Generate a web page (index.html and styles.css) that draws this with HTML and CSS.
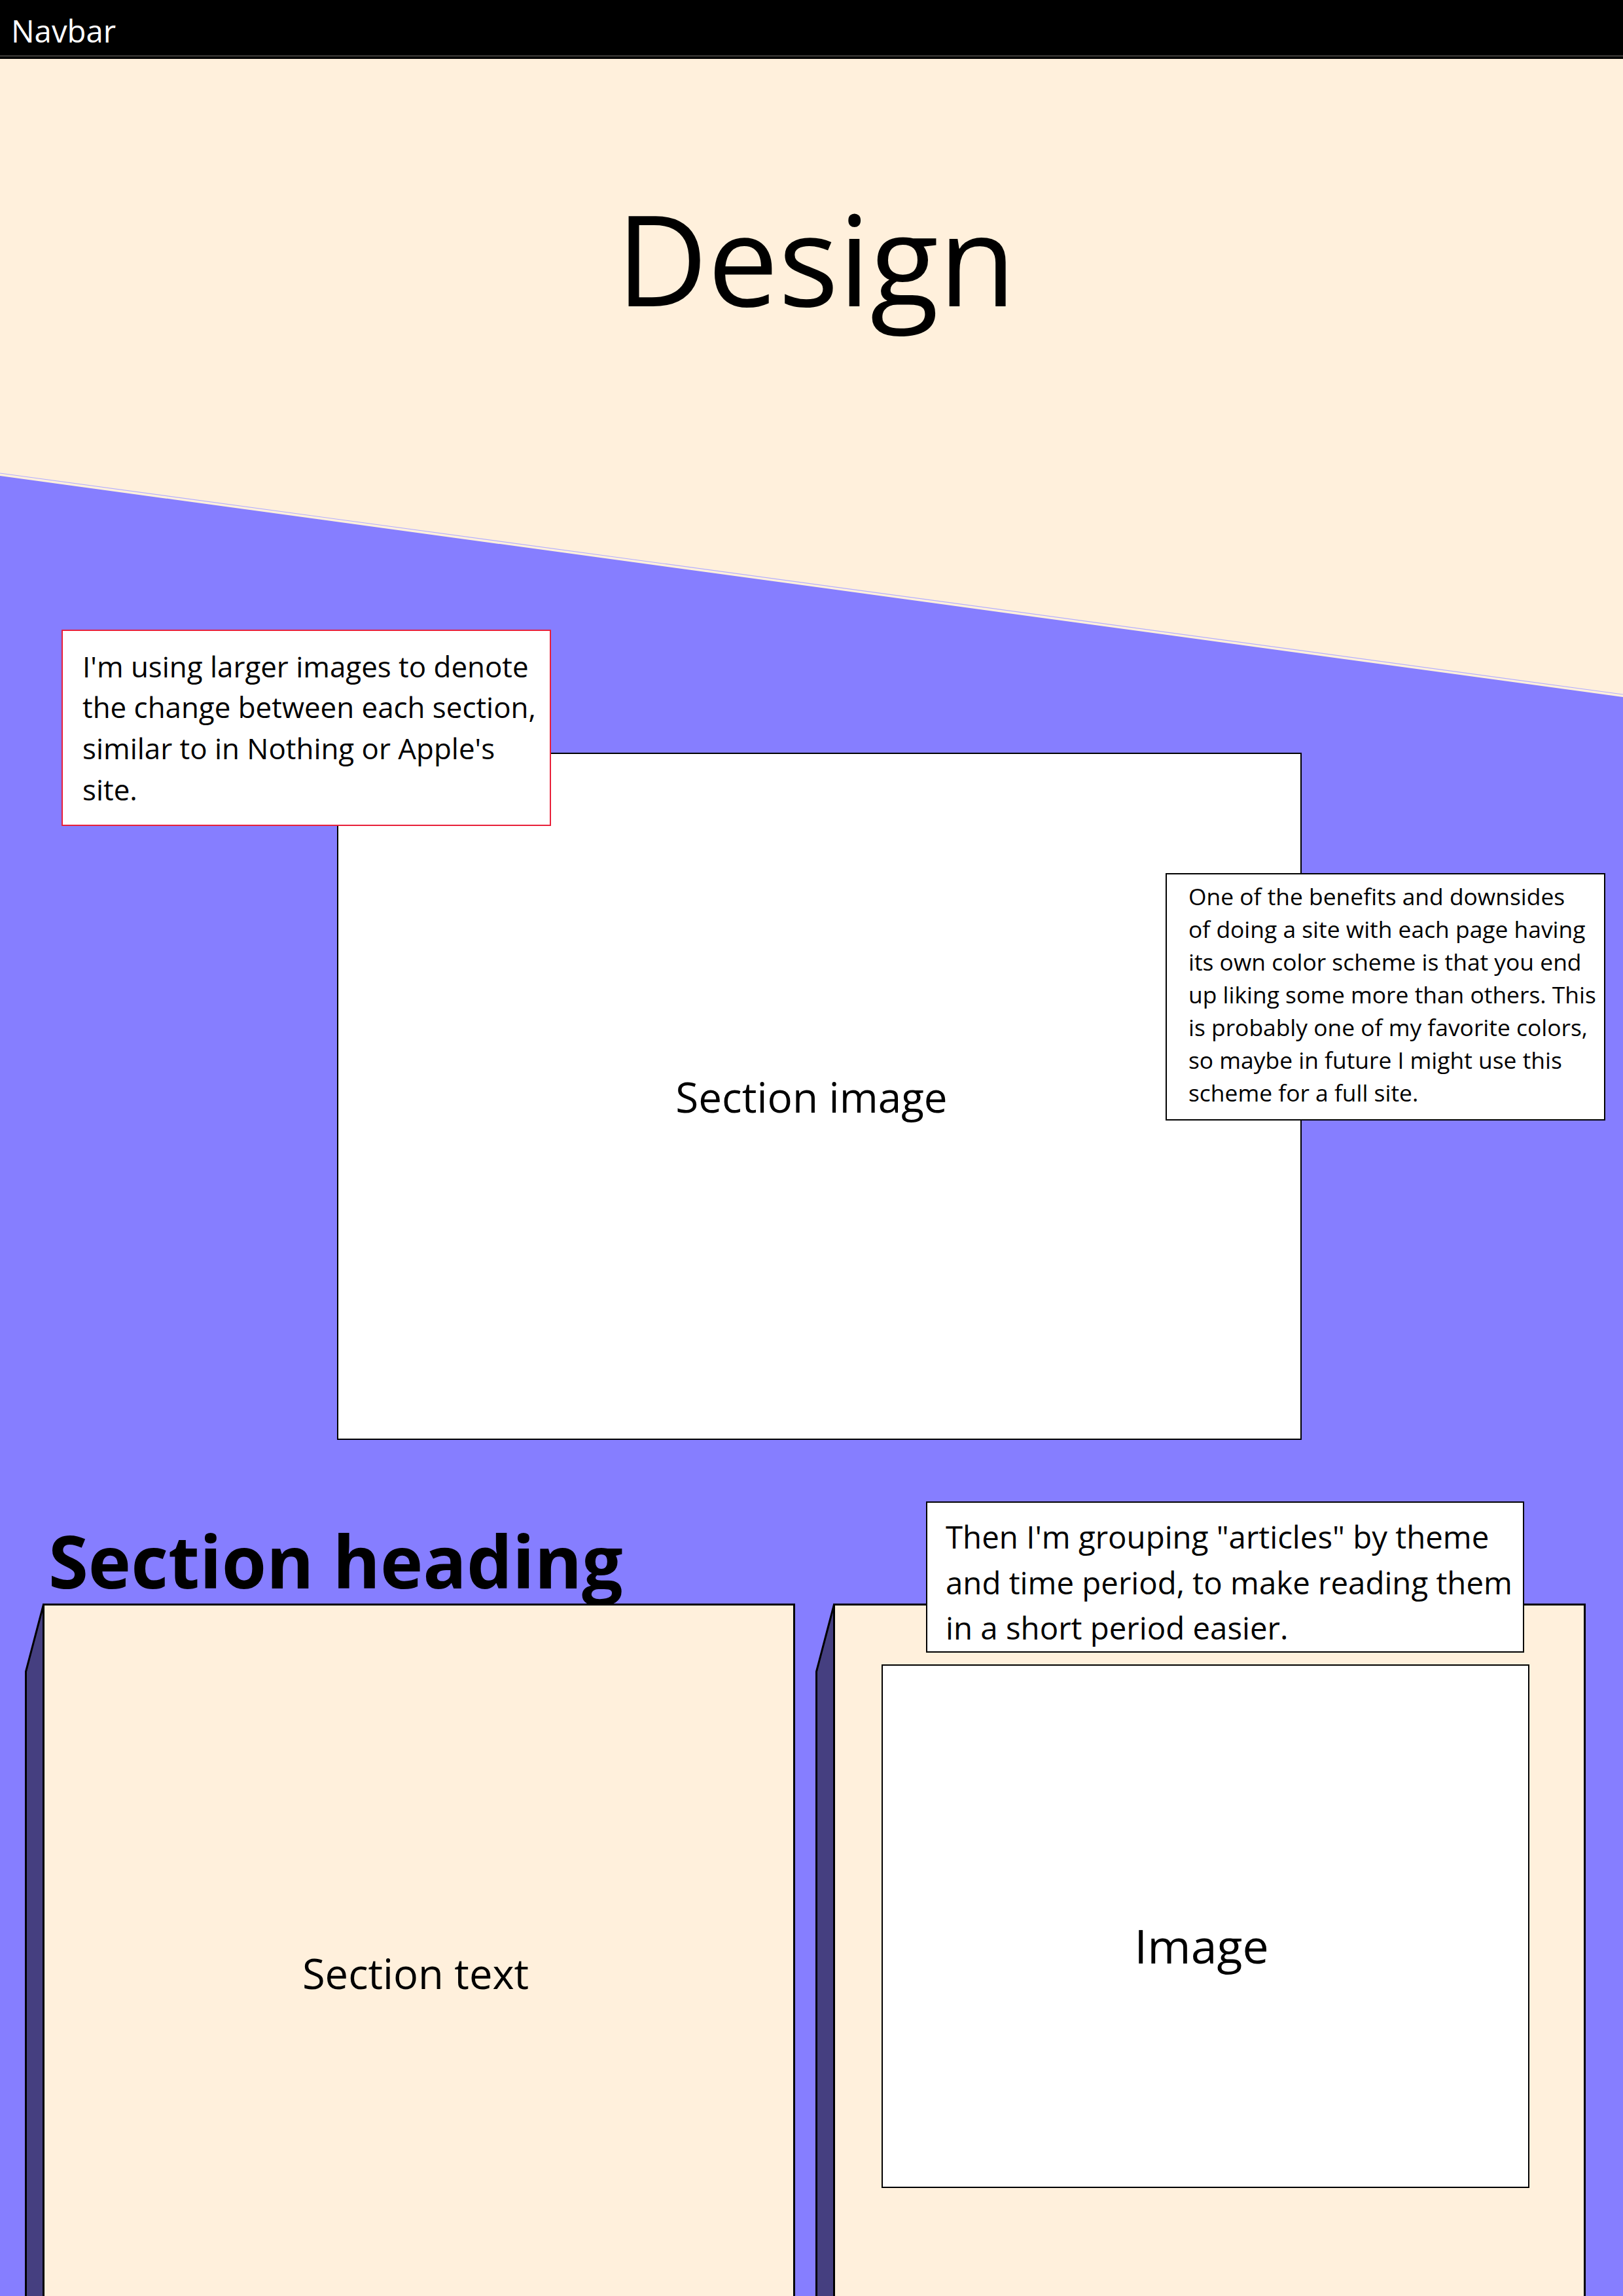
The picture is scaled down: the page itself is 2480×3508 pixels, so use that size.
FILE: index.html
```html
<!DOCTYPE html>
<html lang="en">
<head>
<meta charset="utf-8">
<title>Design</title>
<link rel="stylesheet" href="styles.css">
</head>
<body>
<nav class="navbar">Navbar</nav>
<header class="hero">
  <h1 class="hero-title">Design</h1>
</header>
<main class="band">
  <svg class="slope-line" viewBox="0 0 2480 350" preserveAspectRatio="none" aria-hidden="true">
    <line x1="0" y1="2" x2="2480" y2="340"></line>
  </svg>
  <div class="band-fill">
    <div class="feature">
      <div class="feature-image">Section image</div>
      <aside class="note note-red">I'm using larger images to denote<br>the change between each section,<br>similar to in Nothing or Apple's<br>site.</aside>
      <aside class="note note-side">One of the benefits and downsides<br>of doing a site with each page having<br>its own color scheme is that you end<br>up liking some more than others. This<br>is probably one of my favorite colors,<br>so maybe in future I might use this<br>scheme for a full site.</aside>
    </div>
    <h2 class="section-heading">Section heading</h2>
    <div class="cards">
      <article class="card">
        <svg class="card-side" viewBox="0 0 33 1130" aria-hidden="true"><path d="M31.5 1.5 L4.5 104 L4.5 1130 L31.5 1130 Z"></path></svg>
        <p class="card-text">Section text</p>
      </article>
      <article class="card">
        <svg class="card-side" viewBox="0 0 33 1130" aria-hidden="true"><path d="M31.5 1.5 L4.5 104 L4.5 1130 L31.5 1130 Z"></path></svg>
        <aside class="note note-group">Then I'm grouping "articles" by theme<br>and time period, to make reading them<br>in a short period easier.</aside>
        <div class="card-image">Image</div>
      </article>
    </div>
  </div>
</main>
</body>
</html>
```
FILE: styles.css
```css
html, body {
  margin: 0;
  padding: 0;
}

body {
  background: #FFF0DC;
  color: #000;
  font-family: "Open Sans", "Noto Sans", sans-serif;
}

.navbar {
  box-sizing: border-box;
  height: 90px;
  padding: 14px 0 0 17px;
  background: #000;
  color: #fff;
  font-size: 47.3px;
  border-bottom: 4px solid #000;
  box-shadow: inset 0 -1px 0 #7a7570;
}

.hero {
  box-sizing: border-box;
  height: 637px;
  padding: 172px 0 0 14px;
  text-align: center;
}

.hero-title {
  margin: 0;
  font-size: 192.5px;
  font-weight: 400;
  line-height: normal;
}

.band {
  position: relative;
}

.slope-line {
  position: absolute;
  left: 0;
  top: -6px;
  width: 100%;
  height: 350px;
  z-index: 1;
}

.slope-line line {
  stroke: #b4aeff;
  stroke-width: 1.2;
  vector-effect: non-scaling-stroke;
}

.band-fill {
  box-sizing: border-box;
  height: 2781px;
  overflow: hidden;
  padding-top: 423px;
  background: #867EFF;
  clip-path: polygon(0 0, 100% 338px, 100% 100%, 0 100%);
}

.feature {
  position: relative;
  margin-left: 515px;
  width: 1474px;
  height: 1050px;
}

.feature-image {
  box-sizing: border-box;
  height: 100%;
  padding-right: 24px;
  border: 2px solid #000;
  background: #fff;
  display: flex;
  align-items: center;
  justify-content: center;
  font-size: 63.8px;
}

.note {
  position: absolute;
  box-sizing: border-box;
  margin: 0;
  background: #fff;
  border: 2px solid #000;
}

.note-red {
  left: -421px;
  top: -188px;
  width: 748px;
  height: 300px;
  padding: 22.5px 0 0 30px;
  border-color: #E8203A;
  font-size: 43.9px;
  line-height: 62.7px;
}

.note-side {
  left: 1266px;
  top: 184px;
  width: 672px;
  height: 378px;
  padding: 7.5px 0 0 33px;
  font-size: 35.4px;
  line-height: 50px;
}

.section-heading {
  margin: 129px 0 0;
  padding-left: 74px;
  font-size: 110.5px;
  font-weight: 700;
  line-height: 1;
}

.cards {
  display: flex;
  gap: 58px;
  margin-top: 10px;
  padding-left: 65px;
}

.card {
  position: relative;
  box-sizing: border-box;
  flex: none;
  width: 1150px;
  height: 1130px;
  border: 3px solid #000;
  background: #FFF0DC;
}

.card-side {
  position: absolute;
  left: -33px;
  top: -3px;
  width: 33px;
  height: 1130px;
  overflow: visible;
}

.card-side path {
  fill: #453F80;
  stroke: #000;
  stroke-width: 3;
  stroke-linejoin: round;
}

.card-text {
  margin: 0;
  height: 100%;
  padding-right: 10px;
  box-sizing: border-box;
  display: flex;
  align-items: center;
  justify-content: center;
  font-size: 63.3px;
}

.note-group {
  left: 139px;
  top: -159px;
  width: 914px;
  height: 231px;
  padding: 17.5px 0 0 28px;
  font-size: 47.4px;
  line-height: 69.7px;
}

.card-image {
  box-sizing: border-box;
  margin: 90px 0 0 71px;
  width: 990px;
  height: 800px;
  padding: 58px 12px 0 0;
  border: 2px solid #000;
  background: #fff;
  display: flex;
  align-items: center;
  justify-content: center;
  font-size: 71.7px;
}
```
